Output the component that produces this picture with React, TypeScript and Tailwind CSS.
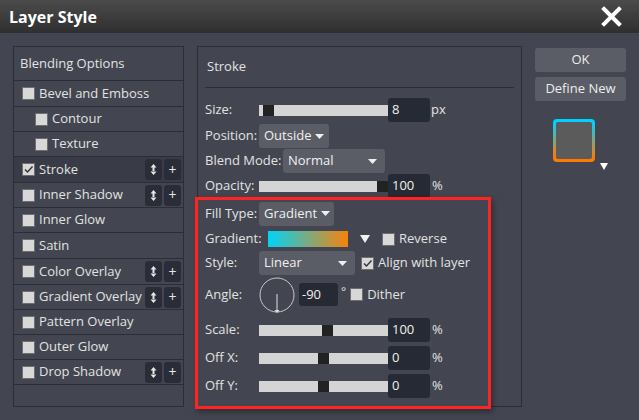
import React from "react";

const font = { fontFamily: '"Open Sans", "Noto Sans", sans-serif' };

function Check({ checked = false }: { checked?: boolean }) {
  return (
    <div className="w-[13px] h-[13px] bg-[#d8d8d8] border border-[#6e6e6e] flex items-center justify-center shrink-0">
      {checked && (
        <svg width="11" height="11" viewBox="0 0 11 11">
          <path d="M2 5.5 L4.5 8 L9.5 2.5" fill="none" stroke="#333" strokeWidth="1.4" />
        </svg>
      )}
    </div>
  );
}

function MiniBtns() {
  return (
    <div className="ml-auto flex gap-[2px] mr-[2px]">
      <div className="w-[17px] h-[21px] bg-[#2a2d37] rounded-[3px] flex items-center justify-center">
        <svg width="7" height="11" viewBox="0 0 7 11">
          <path d="M3.5 0 L6.5 3.5 L0.5 3.5 Z M3.5 11 L6.5 7.5 L0.5 7.5 Z M2.5 3 h2 v5 h-2 Z" fill="#e6e6e6" />
        </svg>
      </div>
      <div className="w-[17px] h-[21px] bg-[#2a2d37] rounded-[3px] flex items-center justify-center text-[#e6e6e6] text-[14px] leading-none">
        +
      </div>
    </div>
  );
}

function ListRow({
  label,
  checked,
  indent,
  btns,
  active,
  h = "h-[25px]",
}: {
  label: string;
  checked?: boolean;
  indent?: boolean;
  btns?: boolean;
  active?: boolean;
  h?: string;
}) {
  return (
    <div
      className={`${h} flex items-center border-b border-[#2b2e37] ${active ? "bg-[#393c46]" : ""} ${
        indent ? "pl-[21px]" : "pl-[8px]"
      }`}
    >
      <Check checked={checked} />
      <span className="ml-[4px] text-[13px] text-[#e2e2e2] whitespace-nowrap">{label}</span>
      {btns && <MiniBtns />}
    </div>
  );
}

function Caret() {
  return (
    <svg width="9" height="5" viewBox="0 0 9 5" className="shrink-0">
      <path d="M0 0 L9 0 L4.5 5 Z" fill="#f0f0f0" />
    </svg>
  );
}

function Dropdown({ text, w, spread }: { text: string; w: string; spread?: boolean }) {
  return (
    <div
      className={`${w} h-[24px] bg-[#5a5c66] rounded-[3px] flex items-center px-[5px] ${
        spread ? "justify-between pr-[8px]" : "gap-[4px]"
      } text-[13px] text-[#f0f0f0]`}
    >
      <span>{text}</span>
      <Caret />
    </div>
  );
}

function Slider({ pos }: { pos: number }) {
  return (
    <div className="w-[129px] h-[11px] bg-[#d4d4d4] relative shrink-0">
      <div className="absolute top-0 h-[11px] w-[11px] bg-[#222]" style={{ left: pos }} />
    </div>
  );
}

function NumBox({ v }: { v: string }) {
  return (
    <div className="w-[42px] h-[24px] bg-[#262a35] rounded-[3px] flex items-center pl-[4px] text-[13px] text-[#f0f0f0] shrink-0">
      {v}
    </div>
  );
}

function Label({ t }: { t: string }) {
  return <span className="w-[54px] shrink-0 text-[13px] text-[#e2e2e2] whitespace-nowrap">{t}</span>;
}

export default function App() {
  return (
    <div style={font} className="w-[639px] h-[420px] bg-[#434650] relative overflow-hidden">
      {/* Title bar */}
      <div className="h-[33px] bg-gradient-to-b from-[#4b4b4b] to-[#2f2f2f] flex items-center px-[9px]">
        <span className="text-[16px] font-bold text-white">Layer Style</span>
        <svg width="21" height="21" viewBox="0 0 21 21" className="ml-auto mr-[8px]">
          <path d="M3 3 L18 18 M18 3 L3 18" stroke="#fff" strokeWidth="4" strokeLinecap="square" />
        </svg>
      </div>

      <div className="flex pl-[13px] pt-[13px]">
        {/* Left list */}
        <div className="w-[171px] h-[361px] border border-[#2b2e37] flex flex-col">
          <div className="h-[34px] border-b border-[#2b2e37] flex items-center pl-[6px] text-[13px] text-[#e2e2e2]">
            Blending Options
          </div>
          <ListRow label="Bevel and Emboss" h="h-[26px]" />
          <ListRow label="Contour" indent />
          <ListRow label="Texture" indent />
          <ListRow label="Stroke" checked btns active h="h-[26px]" />
          <ListRow label="Inner Shadow" btns />
          <ListRow label="Inner Glow" />
          <ListRow label="Satin" h="h-[26px]" />
          <ListRow label="Color Overlay" btns h="h-[26px]" />
          <ListRow label="Gradient Overlay" btns />
          <ListRow label="Pattern Overlay" />
          <ListRow label="Outer Glow" />
          <ListRow label="Drop Shadow" btns />
        </div>

        {/* Middle panel */}
        <div className="ml-[13px] w-[325px] h-[361px] border border-[#2b2e37] px-[7px]">
          <div className="h-[41px] border-b border-[#2b2e37] flex items-center pl-[2px] text-[13px] text-[#e2e2e2]">
            Stroke
          </div>

          <div className="mt-[10px] h-[24px] flex items-center">
            <Label t="Size:" />
            <Slider pos={4} />
            <NumBox v="8" />
            <span className="ml-[1px] text-[13px] text-[#e2e2e2]">px</span>
          </div>
          <div className="mt-[2px] h-[24px] flex items-center">
            <span className="text-[13px] text-[#e2e2e2] w-[54px] shrink-0">Position:</span>
            <Dropdown text="Outside" w="w-[70px]" />
          </div>
          <div className="mt-[1px] h-[24px] flex items-center">
            <span className="text-[13px] text-[#e2e2e2] w-[78px] shrink-0 whitespace-nowrap">Blend Mode:</span>
            <Dropdown text="Normal" w="w-[102px]" spread />
          </div>
          <div className="mt-[1px] h-[24px] flex items-center">
            <Label t="Opacity:" />
            <Slider pos={118} />
            <NumBox v="100" />
            <span className="ml-[2px] text-[13px] text-[#e2e2e2]">%</span>
          </div>

          <div className="mt-[3px] h-[25px] flex items-center">
            <Label t="Fill Type:" />
            <Dropdown text="Gradient" w="w-[75px]" />
          </div>
          <div className="mt-[1px] h-[24px] flex items-center">
            <Label t="Gradient:" />
            <div className="ml-[9px] w-[80px] h-[16px] bg-[linear-gradient(to_right,#00d4f7,#f7820a)]" />
            <svg width="10" height="8" viewBox="0 0 10 8" className="ml-[12px] shrink-0">
              <path d="M0 0 L10 0 L5 8 Z" fill="#f2f2f2" />
            </svg>
            <div className="ml-[12px]">
              <Check />
            </div>
            <span className="ml-[4px] text-[13px] text-[#e2e2e2]">Reverse</span>
          </div>
          <div className="h-[24px] flex items-center">
            <Label t="Style:" />
            <Dropdown text="Linear" w="w-[96px]" spread />
            <div className="ml-[6px]">
              <Check checked />
            </div>
            <span className="ml-[4px] text-[13px] text-[#e2e2e2] whitespace-nowrap">Align with layer</span>
          </div>
          <div className="mt-[2px] h-[35px] flex items-center">
            <Label t="Angle:" />
            <svg width="38" height="38" viewBox="0 0 38 38" className="shrink-0 -ml-[1px]">
              <circle cx="19" cy="19" r="17" fill="none" stroke="#c9c9c9" strokeWidth="1" />
              <path d="M19 18 L19 34" stroke="#e0e0e0" strokeWidth="1" />
              <path d="M16.5 34 L21.5 34 L19 37 Z" fill="#e0e0e0" />
            </svg>
            <div className="ml-[3px] w-[39px] h-[23px] bg-[#262a35] rounded-[3px] flex items-center pl-[3px] text-[13px] text-[#f0f0f0]">
              -90
            </div>
            <span className="ml-[3px] text-[12px] text-[#e2e2e2] -mt-[6px]">°</span>
            <div className="ml-[4px]">
              <Check />
            </div>
            <span className="ml-[4px] text-[13px] text-[#e2e2e2]">Dither</span>
          </div>
          <div className="mt-[6px] h-[24px] flex items-center">
            <Label t="Scale:" />
            <Slider pos={63} />
            <NumBox v="100" />
            <span className="ml-[2px] text-[13px] text-[#e2e2e2]">%</span>
          </div>
          <div className="mt-[4px] h-[24px] flex items-center">
            <Label t="Off X:" />
            <Slider pos={59} />
            <NumBox v="0" />
            <span className="ml-[2px] text-[13px] text-[#e2e2e2]">%</span>
          </div>
          <div className="mt-[4px] h-[24px] flex items-center">
            <Label t="Off Y:" />
            <Slider pos={59} />
            <NumBox v="0" />
            <span className="ml-[2px] text-[13px] text-[#e2e2e2]">%</span>
          </div>
        </div>

        {/* Right column */}
        <div className="ml-[13px] pt-[2px] w-[91px] flex flex-col">
          <div className="h-[24px] bg-[#5a5c66] rounded-[3px] flex items-center justify-center text-[13px] text-[#ededed]">
            OK
          </div>
          <div className="mt-[5px] h-[24px] bg-[#5a5c66] rounded-[3px] flex items-center justify-center text-[13px] text-[#ededed]">
            Define New
          </div>
          <div className="mt-[18px] ml-[18px] flex items-end">
            <div className="w-[42px] h-[43px] rounded-[4px] bg-[linear-gradient(to_bottom,#00d2ff_10%,#ff7a00_90%)] p-[3px]">
              <div className="w-full h-full bg-[#5b5b5b] rounded-[2px]" />
            </div>
            <svg width="8" height="7" viewBox="0 0 8 7" className="ml-[5px] -mb-[8px] shrink-0">
              <path d="M0 0 L8 0 L4 7 Z" fill="#ffffff" />
            </svg>
          </div>
        </div>
      </div>

      {/* annotation highlight */}
      <div className="absolute left-[195px] top-[197px] w-[296px] h-[212px] border-[3px] border-[#ff2323] shadow-[2px_3px_6px_rgba(0,0,0,0.35)] pointer-events-none" />
    </div>
  );
}
